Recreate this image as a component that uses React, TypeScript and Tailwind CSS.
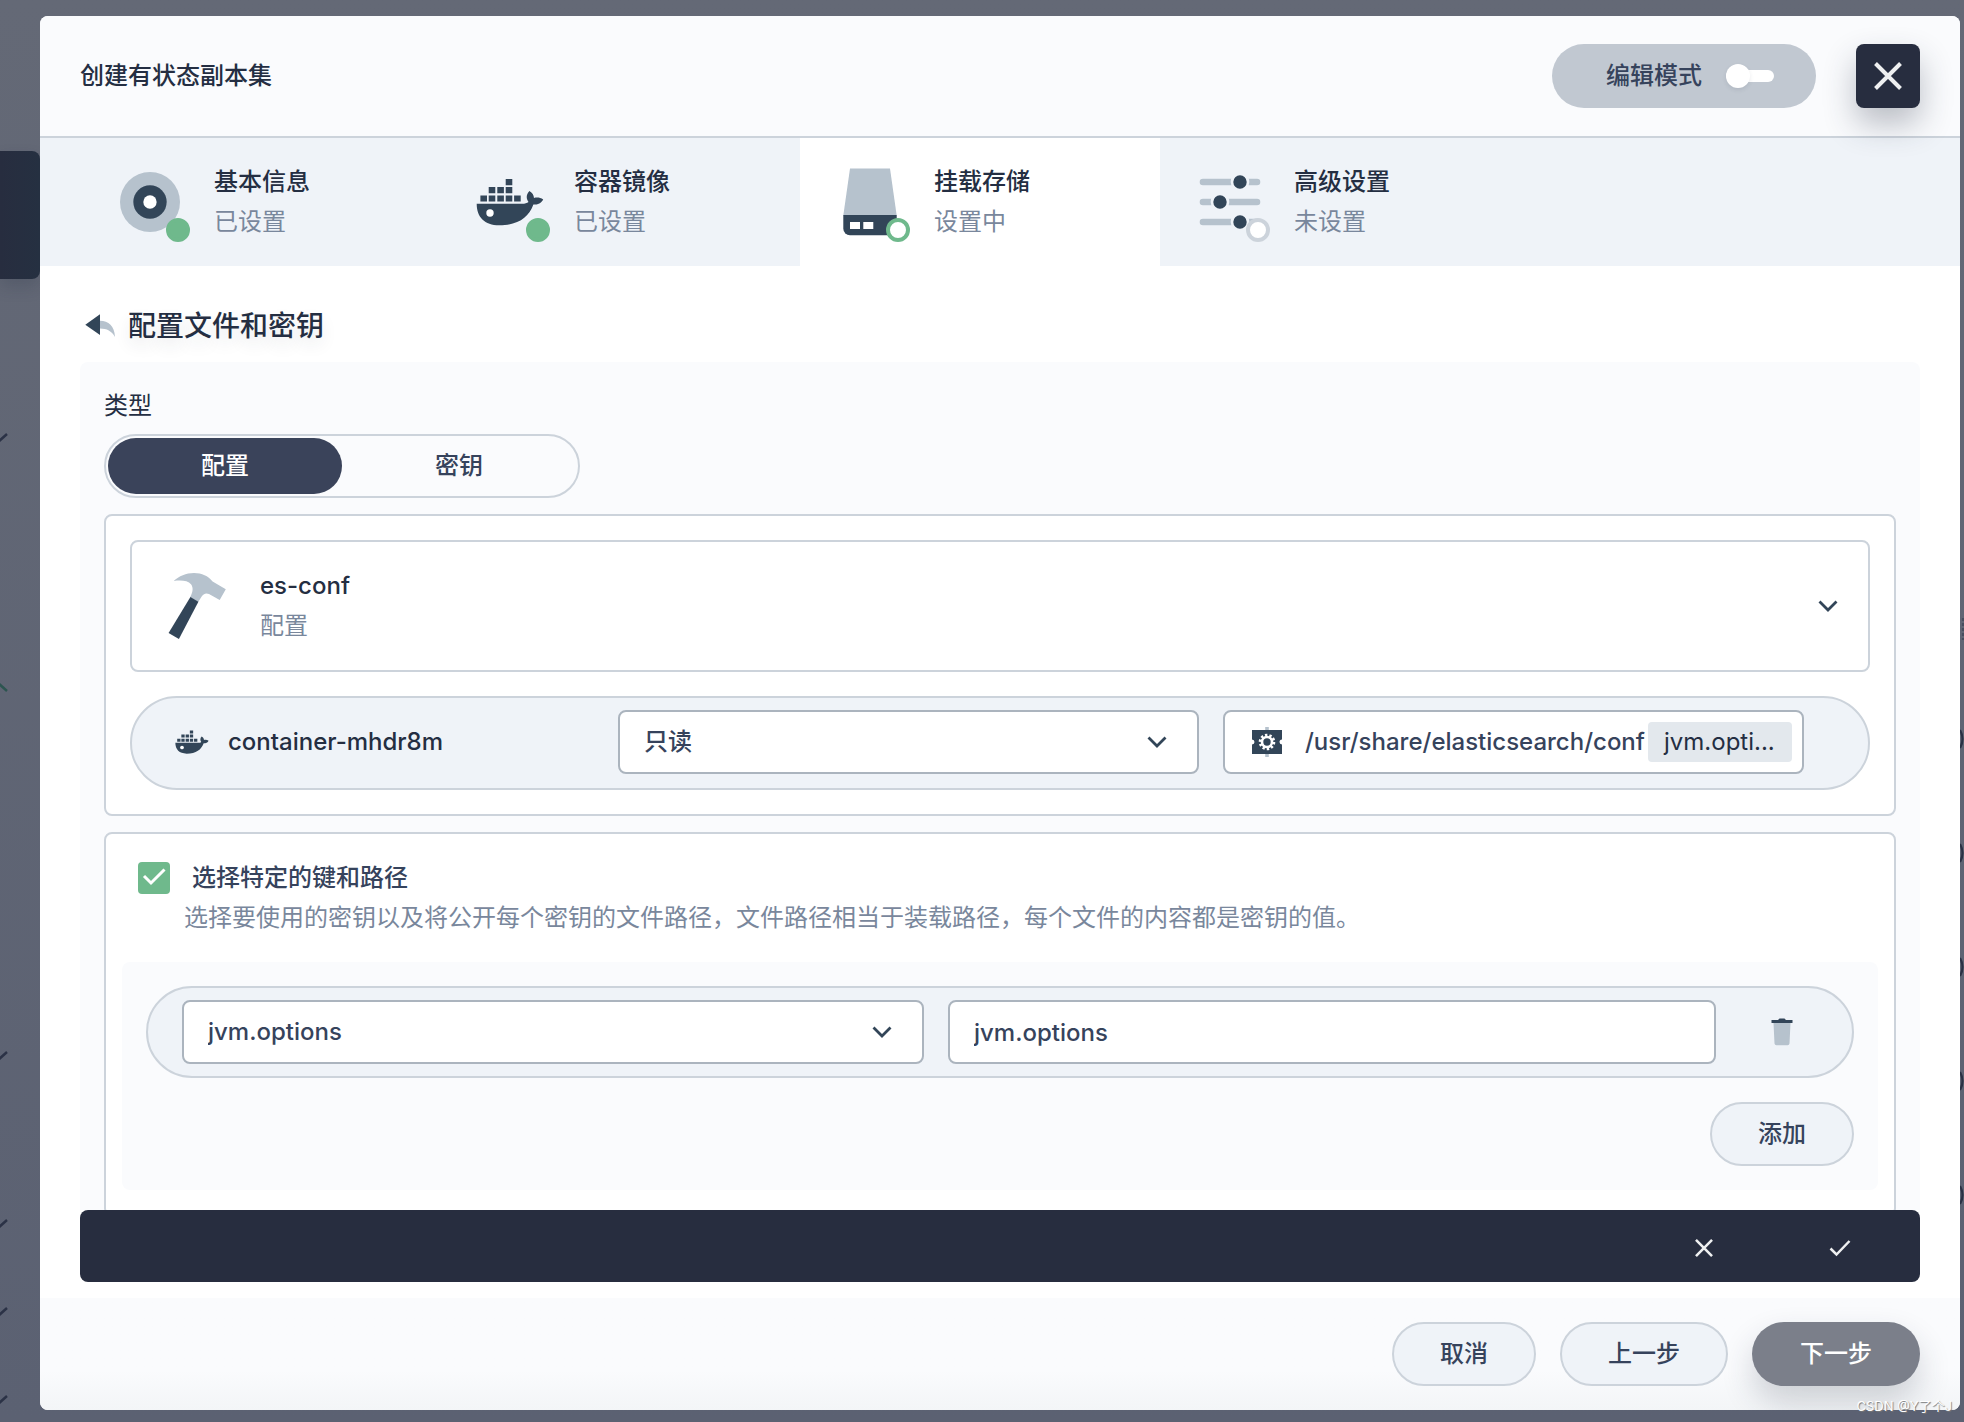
import { useState } from "react";
import type { ReactNode } from "react";

const DockerIcon = ({ className }: { className: string }) => (
  <svg viewBox="0 0 80 80" className={className} aria-hidden="true">
    <g fill="#324558">
      <path d="M35.7 17h6.6v6.2h-6.6zM18.7 25h6.6v6.2h-6.6zM27.3 25h6.6v6.2h-6.6zM35.7 25h6.6v6.2h-6.6z" />
      <path d="M10.4 33.4H17v6.2h-6.6zM18.7 33.4h6.6v6.2h-6.6zM27.3 33.4h6.6v6.2h-6.6zM35.7 33.4h6.6v6.2h-6.6zM44.1 33.4h6.6v6.2h-6.6z" />
      <path d="M6.7 41.7H52c3 0 5-.6 6.5-1.8-2.4-3.2-2.6-7.4.9-10.9 3 1.8 4.4 4.2 4.6 7 3-.8 6.4-.4 9.2 1.4-1.8 3.7-5.2 5.2-9.8 5.200C58.5 55.6 48.5 63.3 29.3 63.3 14.5 63.3 6.7 55 6.7 41.7z" />
    </g>
    <circle cx="20" cy="51" r="3.7" fill="#fff" />
  </svg>
);

const DiscIcon = () => (
  <svg viewBox="0 0 24 24" className="size-20" aria-hidden="true">
    <circle cx="12" cy="12" r="9" fill="#b6c2cd" />
    <circle cx="12" cy="12" r="5" fill="#324558" />
    <circle cx="12" cy="12" r="2" fill="#fff" />
  </svg>
);

const DriveIcon = () => (
  <svg viewBox="0 0 80 80" className="size-20" aria-hidden="true">
    <path d="M20 6.500h40l6.700 47H13.300z" fill="#b6c2cd" />
    <path d="M13.300 53h53.400v13.600a6.600 6.600 0 0 1-6.600 6.600H19.900a6.600 6.600 0 0 1-6.600-6.600z" fill="#324558" />
    <path d="M20 60h10v7H20zM33.300 60h10v7h-10z" fill="#fff" />
  </svg>
);

const SlidersIcon = () => (
  <svg viewBox="0 0 80 80" className="size-20" aria-hidden="true">
    <path
      d="M13 20h54M13 40h54M13 60h54"
      stroke="#b6c2cd"
      strokeWidth="6.6"
      strokeLinecap="round"
    />
    <g fill="#324558" stroke="#eff3f8" strokeWidth="2.6">
      <circle cx="50" cy="20" r="8" />
      <circle cx="30" cy="40" r="8" />
      <circle cx="50" cy="60" r="8" />
    </g>
  </svg>
);

const HammerIcon = () => (
  <svg viewBox="0 0 80 80" className="size-20" aria-hidden="true">
    <path
      d="M17.700 15C23 10 30 7 38 7c8 0 14 3 18.600 8.400L69.800 23.300 63.700 34 53 28c-3-1.500-6 0-7.500 2.700L42.200 36 34 31.200c3-5 3.500-9.700 1-13C32 14.500 25 14 17.700 15z"
      fill="#b6c2cd"
    />
    <path d="M34.400 31l8 4.700L22.900 73 12.600 67z" fill="#324558" />
  </svg>
);

const BackIcon = () => (
  <svg viewBox="0 0 40 40" className="size-10" aria-hidden="true">
    <path d="M20 14.700c8.500.3 14.500 5 15 16.300-3.500-6-8-8.300-15-8.400z" fill="#b6c2cd" />
    <path d="M5.300 18.700L20 8.300V29z" fill="#324558" />
  </svg>
);

const MountIcon = () => (
  <svg viewBox="0 0 36 36" className="size-9 shrink-0" aria-hidden="true">
    <path d="M16.200 3h3.600v30h-3.600z" fill="#b6c2cd" />
    <path
      d="M3 6h30v9.500a2.500 2.500 0 0 0 0 5V30H3v-9.500a2.500 2.500 0 0 0 0-5z"
      fill="#324558"
    />
    <circle cx="18" cy="18" r="6.8" fill="none" stroke="#fff" strokeWidth="3" strokeDasharray="2.3 1.97" />
    <circle cx="18" cy="18" r="5" fill="none" stroke="#fff" strokeWidth="2.6" />
  </svg>
);

const TrashIcon = () => (
  <svg viewBox="0 0 36 36" className="size-9" aria-hidden="true">
    <path d="M9.500 9h17l-1 20.500a2 2 0 0 1-2 1.800h-11a2 2 0 0 1-2-1.800z" fill="#b6c2cd" />
    <path d="M7.500 6H14l1.500-1.500h5L22 6h6.500v3h-21z" fill="#324558" />
  </svg>
);

const CrossIcon = ({ className }: { className: string }) => (
  <svg viewBox="0 0 28 28" className={className} aria-hidden="true">
    <path d="M1.500 1.500l25 25M26.500 1.500l-25 25" stroke="#eff0f1" strokeWidth="4" />
  </svg>
);

const Chevron = () => (
  <svg
    viewBox="0 0 20 12"
    className="pointer-events-none absolute top-1/2 right-8 w-5 -translate-y-1/2"
    aria-hidden="true"
  >
    <path d="M1.500 1.500l8.500 8.500 8.500-8.500" fill="none" stroke="#324558" strokeWidth="2.8" />
  </svg>
);

const dotStyles = {
  done: "border-[#6fb98c] bg-[#6fb98c]",
  current: "border-[#6fb98c] bg-white",
  pending: "border-[#ccd3db] bg-white",
};

type StepProps = {
  icon: ReactNode;
  title: string;
  text: string;
  state: keyof typeof dotStyles;
};

const Step = ({ icon, title, text, state }: StepProps) => (
  <button
    type="button"
    className={`flex w-[360px] items-center gap-6 py-6 pl-[30px] text-left ${
      state === "current" ? "bg-white" : ""
    }`}
  >
    <span className="relative size-20">
      {icon}
      <span
        className={`absolute right-0 bottom-0 size-6 rounded-full border-4 ${dotStyles[state]}`}
      />
    </span>
    <span className="leading-10">
      <span className="block font-medium text-[#242e42]">{title}</span>
      <span className="block font-normal text-[#79879c]">{text}</span>
    </span>
  </button>
);

type SelectProps = { label: string; value: string };

const Select = ({ label, value }: SelectProps) => (
  <div className="relative min-w-0">
    <select
      aria-label={label}
      defaultValue={value}
      className="h-16 w-full appearance-none rounded-lg border-2 border-[#abb4be] bg-white px-6 font-medium text-[#36435c]"
    >
      <option>{value}</option>
    </select>
    <Chevron />
  </div>
);

const PillButton = ({ children }: { children: ReactNode }) => (
  <button
    type="button"
    className="h-16 rounded-full border-2 border-[#ccd3db] bg-[#eff3f8] px-[46px] font-medium text-[#36435c]"
  >
    {children}
  </button>
);

// Slivers of the list page that stay visible beside the dialog
const Backdrop = () => (
  <div aria-hidden="true">
    <div className="absolute top-[151px] left-0 h-32 w-10 rounded-r-lg bg-linear-to-r from-[#272d3f] to-[#253041] shadow-[0_8px_16px_rgba(36,46,66,0.2)]" />
    <svg className="absolute top-0 left-0 h-[1422px] w-10" viewBox="0 0 40 1422">
      <g stroke="#2b3246" strokeWidth="2.5">
        <path d="M-2 442l9-8M-2 1060l9-8M-2 1228l9-8M-2 1316l9-8M-2 1404l9-8" />
        <path d="M-2 683l9 8" stroke="#2c5550" />
      </g>
    </svg>
    <svg className="absolute top-0 right-0 h-[1422px] w-1" viewBox="0 0 4 1422">
      <g fill="none" stroke="#2a3144" strokeWidth="2.2">
        <path d="M0 730q5 9 0 18M0 844q5 9 0 18M0 958q5 9 0 18M0 1072q5 9 0 18M0 1186q5 9 0 18" />
        <path d="M3 618v22" strokeDasharray="3 2" stroke="#474e5f" />
      </g>
    </svg>
  </div>
);

const App = () => {
  const [kind, setKind] = useState("配置");

  return (
    <div className="relative flex h-screen flex-col bg-linear-to-b from-[#646976] to-[#5b6172] pt-4 pr-1 pb-3 pl-10 font-['Inter','Noto_Sans_CJK_SC',sans-serif] text-2xl text-[#242e42]">
      <Backdrop />
      <main className="relative flex min-h-0 flex-1 flex-col overflow-hidden rounded-lg bg-white">
        <header className="flex h-[122px] shrink-0 items-center border-b-2 border-[#ccd3db] bg-[#fafbfd] px-10">
          <h1 className="flex-1 font-medium">创建有状态副本集</h1>
          <label className="mr-10 flex h-16 items-center gap-6 rounded-full bg-[#c1c8d1] pr-[42px] pl-[54px] font-medium text-[#36435c]">
            编辑模式
            <input type="checkbox" role="switch" className="sr-only" />
            <span className="flex h-3 w-12 items-center rounded-full bg-white">
              <span className="size-6 rounded-full bg-white shadow-[0_2px_4px_rgba(36,46,66,0.1)]" />
            </span>
          </label>
          <button
            type="button"
            aria-label="关闭"
            className="relative z-10 flex size-16 items-center justify-center rounded-lg bg-[#272d3f] shadow-[0_16px_32px_rgba(35,45,65,0.3)]"
          >
            <CrossIcon className="size-7" />
          </button>
        </header>

        <nav className="flex shrink-0 bg-[#eff3f8] px-10">
          <Step icon={<DiscIcon />} title="基本信息" text="已设置" state="done" />
          <Step
            icon={<DockerIcon className="size-20" />}
            title="容器镜像"
            text="已设置"
            state="done"
          />
          <Step icon={<DriveIcon />} title="挂载存储" text="设置中" state="current" />
          <Step icon={<SlidersIcon />} title="高级设置" text="未设置" state="pending" />
        </nav>

        <section className="min-h-0 flex-1 overflow-y-auto px-10 pt-10 [scrollbar-width:none]">
          <div className="mb-4 flex items-center gap-2">
            <button type="button" aria-label="返回">
              <BackIcon />
            </button>
            <h2 className="text-[28px] leading-10 font-medium [text-shadow:0_8px_16px_rgba(35,45,65,0.1)]">
              配置文件和密钥
            </h2>
          </div>

          <div className="rounded-lg bg-[#fafbfd] p-6">
            <p className="mb-2 leading-10">类型</p>
            <div className="flex h-16 w-[476px] rounded-full border-2 border-[#ccd3db] p-0.5 font-medium">
              {["配置", "密钥"].map((item) => (
                <button
                  key={item}
                  type="button"
                  onClick={() => setKind(item)}
                  className={`flex-1 rounded-full ${
                    kind === item ? "bg-[#3a435a] text-white" : "text-[#36435c]"
                  }`}
                >
                  {item}
                </button>
              ))}
            </div>

            <div className="mt-4 rounded-lg border-2 border-[#ccd3db] bg-white p-6">
              <div className="relative">
                <button
                  type="button"
                  aria-haspopup="listbox"
                  className="flex w-full items-center gap-6 rounded-lg border-2 border-[#ccd3db] p-6 text-left"
                >
                  <HammerIcon />
                  <span className="leading-10">
                    <span className="block font-medium">es-conf</span>
                    <span className="block font-normal text-[#79879c]">配置</span>
                  </span>
                </button>
                <Chevron />
              </div>

              <div className="mt-6 grid grid-cols-[422fr_581fr_581fr] items-center gap-6 rounded-full border-2 border-[#ccd3db] bg-[#eff3f8] pt-3 pr-16 pb-[14px] pl-10">
                <div className="flex items-center gap-4 font-medium">
                  <DockerIcon className="size-10" />
                  container-mhdr8m
                </div>
                <Select label="访问模式" value="只读" />
                <div className="flex h-16 min-w-0 items-center rounded-lg border-2 border-[#abb4be] bg-white pr-[10px] pl-6">
                  <MountIcon />
                  <input
                    type="text"
                    aria-label="挂载路径"
                    defaultValue="/usr/share/elasticsearch/conf"
                    className="ml-5 min-w-0 flex-1 font-medium text-[#36435c]"
                  />
                  <span className="w-36 rounded bg-[#e3e8ed] px-4 leading-10 font-normal whitespace-nowrap">
                    jvm.opti...
                  </span>
                </div>
              </div>
            </div>

            <div className="mt-4 rounded-lg border-2 border-[#ccd3db] bg-white px-4 py-6">
              <div className="flex items-center pl-4 leading-10">
                <span className="relative mr-[22px] size-8">
                  <input
                    id="specific-keys"
                    type="checkbox"
                    defaultChecked
                    className="block size-8 appearance-none rounded bg-[#6fb98c]"
                  />
                  <svg
                    viewBox="0 0 32 32"
                    className="pointer-events-none absolute inset-0"
                    aria-hidden="true"
                  >
                    <path d="M6 14l7 7L26.500 7.500" fill="none" stroke="#fff" strokeWidth="3" />
                  </svg>
                </span>
                <label htmlFor="specific-keys" className="font-medium text-[#36435c]">
                  选择特定的键和路径
                </label>
              </div>
              <p className="pl-[62px] leading-10 font-normal text-[#79879c]">
                选择要使用的密钥以及将公开每个密钥的文件路径，文件路径相当于装载路径，每个文件的内容都是密钥的值。
              </p>

              <div className="mt-6 rounded-lg bg-[#fafbfd] p-6">
                <div className="grid grid-cols-[742fr_768fr_84px] items-center gap-6 rounded-full border-2 border-[#ccd3db] bg-[#eff3f8] py-3 pr-7 pl-[34px]">
                  <Select label="键" value="jvm.options" />
                  <input
                    type="text"
                    aria-label="路径"
                    defaultValue="jvm.options"
                    className="h-16 min-w-0 rounded-lg border-2 border-[#abb4be] bg-white px-6 font-medium text-[#36435c]"
                  />
                  <button type="button" aria-label="删除" className="flex justify-center">
                    <TrashIcon />
                  </button>
                </div>
                <div className="mt-6 flex justify-end">
                  <PillButton>添加</PillButton>
                </div>
              </div>
            </div>
          </div>
        </section>

        <div className="mx-10 mb-4 flex h-[72px] shrink-0 justify-end rounded-lg bg-[#272d3f] px-3 pt-1">
          <button type="button" aria-label="放弃" className="flex w-[136px] items-center justify-center">
            <CrossIcon className="size-[18px]" />
          </button>
          <button type="button" aria-label="确定" className="flex w-[136px] items-center justify-center">
            <svg viewBox="0 0 22 18" className="w-[22px]" aria-hidden="true">
              <path d="M1.500 9.500l6 6L20.500 2" fill="none" stroke="#eff0f1" strokeWidth="2.5" />
            </svg>
          </button>
        </div>

        <footer className="flex shrink-0 justify-end gap-6 bg-linear-to-b from-[#fafbfd] from-65% to-[#f3f5f7] px-10 py-6">
          <PillButton>取消</PillButton>
          <PillButton>上一步</PillButton>
          <button
            type="button"
            className="h-16 rounded-full bg-[#7b7f8a] px-12 font-medium text-white shadow-[0_16px_32px_rgba(35,45,65,0.2)]"
          >
            下一步
          </button>
        </footer>
      </main>
      <span className="absolute right-3 bottom-2 text-[13px] leading-4 text-white [text-shadow:1px_1px_1px_#777]">
        CSDN @Y了个J
      </span>
    </div>
  );
};

export default App;
